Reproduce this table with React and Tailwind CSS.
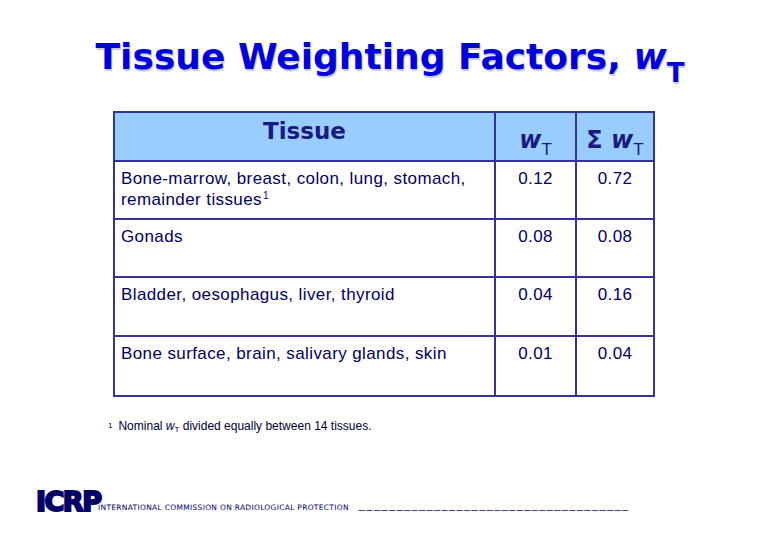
import React from 'react';

const rows = [
  { tissue: <>Bone-marrow, breast, colon, lung, stomach,<br />remainder tissues<span className="text-[10px] relative -top-[6px] ml-[1px]">1</span></>, w: '0.12', sum: '0.72', h: 'h-[58px]' },
  { tissue: 'Gonads', w: '0.08', sum: '0.08', h: 'h-[58px]' },
  { tissue: 'Bladder, oesophagus, liver, thyroid', w: '0.04', sum: '0.16', h: 'h-[59px]' },
  { tissue: 'Bone surface, brain, salivary glands, skin', w: '0.01', sum: '0.04', h: 'h-[60px]' },
];

export default function App() {
  return (
    <div className="w-[780px] h-[540px] bg-white relative overflow-hidden flex flex-col">
      {/* Title */}
      <h1 className="mt-[35px] text-center text-[36px] leading-[44px] font-bold text-[#0000dd] font-['DejaVu_Sans',sans-serif] [text-shadow:1px_2px_1px_#c8c8d4]">
        Tissue Weighting Factors, <i>w</i><sub className="text-[26px] align-[-6px]">T</sub>
      </h1>

      {/* Table */}
      <table className="ml-[113px] mt-[32px] w-[542px] border-collapse border-2 border-[#333399] font-['Liberation_Sans',Arial,sans-serif] text-[#000066]">
        <thead>
          <tr className="h-[49px] bg-[#99ccff]">
            <th className="w-[381px] border-2 border-[#333399] align-top pt-[5px] text-[23px] leading-[26px] font-bold text-[#1a1a80] font-['DejaVu_Sans',sans-serif]">Tissue</th>
            <th className="w-[81px] border-2 border-[#333399] pt-[6px] text-[24px] font-bold text-[#1a1a80] font-['DejaVu_Sans',sans-serif]">
              <i>w</i><sub className="text-[17px] font-normal font-['Liberation_Sans',sans-serif] align-[-3px]">T</sub>
            </th>
            <th className="border-2 border-[#333399] pt-[6px] text-[24px] font-bold text-[#1a1a80] font-['DejaVu_Sans',sans-serif]">
              Σ <i>w</i><sub className="text-[17px] font-normal font-['Liberation_Sans',sans-serif] align-[-3px]">T</sub>
            </th>
          </tr>
        </thead>
        <tbody>
          {rows.map((r, i) => (
            <tr key={i} className={r.h}>
              <td className="border-2 border-[#333399] align-top pl-[6px] pt-[6px] text-[17px] leading-[21px] tracking-[0.4px]">{r.tissue}</td>
              <td className="border-2 border-[#333399] align-top text-center pt-[6px] text-[17px] leading-[21px] tracking-[0.4px]">{r.w}</td>
              <td className="border-2 border-[#333399] align-top text-center pt-[6px] text-[17px] leading-[21px] tracking-[0.4px]">{r.sum}</td>
            </tr>
          ))}
        </tbody>
      </table>

      {/* Footnote */}
      <div className="ml-[108px] mt-[20px] flex items-baseline gap-[6px] font-['Liberation_Sans',Arial,sans-serif] text-[12px] text-[#000033]">
        <span className="text-[8px] relative -top-[2px]">1</span>
        <span>Nominal <i>w</i><sub className="text-[8px]">T</sub> divided equally between 14 tissues.</span>
      </div>

      {/* Footer */}
      <div className="mt-auto mb-[28px] ml-[36px] flex items-end">
        <span className="w-[62px] text-[27px] leading-[21px] font-bold tracking-[-1.5px] text-[#000066] font-['DejaVu_Sans',sans-serif] [-webkit-text-stroke:2px_#000066]">ICRP</span>
        <span className="text-[7.5px] leading-[9px] tracking-[0.3px] text-[#000066] font-['DejaVu_Sans',sans-serif]">INTERNATIONAL COMMISSION ON RADIOLOGICAL PROTECTION</span>
        <span className="ml-[10px] mb-[2px] text-[11px] leading-[10px] tracking-[1.4px] text-[#000066] font-['Liberation_Sans',sans-serif]">____________________________________</span>
      </div>
    </div>
  );
}
